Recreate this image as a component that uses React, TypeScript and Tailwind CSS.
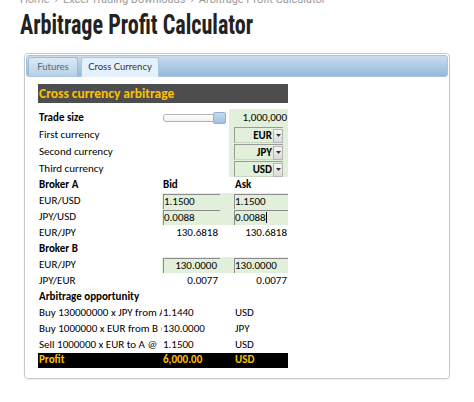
import React from 'react';

const cell = "font-['Carlito','Lato',sans-serif] text-[11px] text-black";

function Dropdown({ value }: { value: string }) {
  return (
    <div className="h-[16px] mx-[5px] flex border-t border-l border-[#9a9a9a] border-b border-b-[#c9d6c0] bg-[#e2efda]">
      <span className="flex-1 text-right font-bold leading-[15px] pr-[1px]">{value}</span>
      <span className="w-[10px] h-[14px] mt-[0.5px] border border-[#b5b5b5] bg-gradient-to-b from-[#f6f6f6] to-[#d9d9d9] flex items-center justify-center">
        <svg width="5" height="3" viewBox="0 0 5 3">
          <path d="M0 0h5L2.5 3z" fill="#333" />
        </svg>
      </span>
    </div>
  );
}

function InputBox({ value, align = 'left', caret = false }: { value: string; align?: 'left' | 'right'; caret?: boolean }) {
  return (
    <div
      className={`h-[15px] border-t border-l border-[#8c8c8c] leading-[14px] ${align === 'right' ? 'text-right pr-[3px]' : 'text-left'}`}
    >
      {value}
      {caret && <span className="inline-block w-[1px] h-[11px] bg-black align-[-2px]" />}
    </div>
  );
}

function Row({ label, bold = false, children }: { label: string; bold?: boolean; children?: React.ReactNode }) {
  return (
    <div className="flex h-[16px] items-center">
      <div className={`w-[124px] pl-[1px] whitespace-nowrap overflow-hidden ${bold ? 'font-bold' : ''}`}>{label}</div>
      {children}
    </div>
  );
}

export default function App() {
  return (
    <div className="w-[474px] h-[402px] overflow-hidden bg-white pl-[20px]">
      {/* breadcrumb, cut off at top */}
      <div className="-mt-[7px] h-[13px] text-[11px] leading-[13px] text-[#9a9a9a] font-['Roboto',sans-serif] whitespace-nowrap flex gap-[5px]">
        <span>Home</span>
        <span>›</span>
        <span>Excel Trading Downloads</span>
        <span>›</span>
        <span>Arbitrage Profit Calculator</span>
      </div>

      <h1 className="mt-[4px] h-[30px] text-[27px] leading-[30px] font-bold text-[#222] font-['Roboto_Condensed','Liberation_Sans_Narrow','Roboto',sans-serif] whitespace-nowrap origin-left scale-x-[0.82]">
        Arbitrage Profit Calculator
      </h1>

      {/* tab panel */}
      <div className="mt-[13px] ml-[4px] w-[426px] h-[326px] border border-[#c9c9c9] rounded-[4px] p-[1px] shadow-[0_1px_2px_rgba(0,0,0,0.08)]">
        <div className="h-[22px] rounded-[3px] border border-[#a6c4de] bg-gradient-to-b from-[#c9ddef] to-[#94b9da] flex items-end pl-[1px] gap-[3px] font-['Lato',sans-serif] text-[9.5px]">
          <div className="h-[19px] w-[50px] rounded-t-[3px] border border-b-0 border-[#9dbcd8] bg-gradient-to-b from-[#dde9f4] to-[#b7d0e6] text-[#4f6c86] flex items-center justify-center">
            Futures
          </div>
          <div className="h-[20px] w-[78px] -mb-[1px] rounded-t-[3px] border border-b-0 border-[#aac8e2] bg-[#e4f0fb] text-[#333] flex items-center justify-center">
            Cross Currency
          </div>
        </div>

        <div className={`pl-[12px] pt-[7px] ${cell}`}>
          <div className="w-[250px] h-[19px] bg-[#4d4d4d] text-[#ffc000] font-bold text-[13.5px] leading-[19px] pl-[1px]">
            Cross currency arbitrage
          </div>

          {/* inputs */}
          <div className="mt-[6px] flex">
            <div className="w-[124px]">
              <div className="h-[17px] leading-[17px] pl-[1px] font-bold">Trade size</div>
              <div className="h-[17px] leading-[17px] pl-[1px]">First currency</div>
              <div className="h-[17px] leading-[17px] pl-[1px]">Second currency</div>
              <div className="h-[17px] leading-[17px] pl-[1px]">Third currency</div>
            </div>
            <div className="w-[67px] pt-[4px] pl-[1px]">
              <div className="relative w-[63px] h-[10px]">
                <div className="absolute left-0 top-[1px] w-[54px] h-[8px] rounded-[3px] border border-[#b4b4b4] bg-gradient-to-b from-[#ffffff] to-[#f0f0f0]" />
                <div className="absolute left-[50px] top-[-1px] w-[13px] h-[12px] rounded-[2px] border border-[#8fb0cf] bg-gradient-to-b from-[#c4dbf0] to-[#9fc2e3]" />
              </div>
            </div>
            <div className="w-[59px] h-[68px] bg-[#e2efda]">
              <div className="h-[17px] leading-[17px] text-right pr-[1px]">1,000,000</div>
              <div className="h-[17px] pt-[1px]"><Dropdown value="EUR" /></div>
              <div className="h-[17px] pt-[1px]"><Dropdown value="JPY" /></div>
              <div className="h-[17px] pt-[1px]"><Dropdown value="USD" /></div>
            </div>
          </div>

          {/* broker A */}
          <Row label="Broker A" bold>
            <div className="w-[72px] pl-[1px] font-bold">Bid</div>
            <div className="w-[54px] pl-[1px] font-bold">Ask</div>
          </Row>
          <Row label="EUR/USD">
            <div className="flex h-[16px] bg-[#e2efda] pt-[1px]">
              <div className="w-[58px] pl-[1px]"><InputBox value="1.1500" /></div>
              <div className="w-[14px]" />
              <div className="w-[54px]"><InputBox value="1.1500" /></div>
            </div>
          </Row>
          <Row label="JPY/USD">
            <div className="flex h-[16px] bg-[#e2efda] pt-[1px]">
              <div className="w-[58px] pl-[1px]"><InputBox value="0.0088" /></div>
              <div className="w-[14px]" />
              <div className="w-[54px]"><InputBox value="0.0088" caret /></div>
            </div>
          </Row>
          <Row label="EUR/JPY">
            <div className="w-[58px] text-right pr-[2px]">130.6818</div>
            <div className="w-[14px]" />
            <div className="w-[54px] text-right pr-[1px]">130.6818</div>
          </Row>

          {/* broker B */}
          <Row label="Broker B" bold />
          <Row label="EUR/JPY">
            <div className="flex h-[16px] bg-[#e2efda] pt-[1px]">
              <div className="w-[58px] pl-[1px]"><InputBox value="130.0000" align="right" /></div>
              <div className="w-[14px]" />
              <div className="w-[54px]"><InputBox value="130.0000" /></div>
            </div>
          </Row>
          <Row label="JPY/EUR">
            <div className="w-[58px] text-right pr-[2px]">0.0077</div>
            <div className="w-[14px]" />
            <div className="w-[54px] text-right pr-[1px]">0.0077</div>
          </Row>

          {/* result */}
          <Row label="Arbitrage opportunity" bold />
          <Row label="Buy 130000000 x JPY from A @">
            <div className="w-[72px] pl-[1px]">1.1440</div>
            <div className="w-[54px] pl-[1px]">USD</div>
          </Row>
          <Row label="Buy 1000000 x EUR from B @">
            <div className="w-[72px] pl-[1px]">130.0000</div>
            <div className="w-[54px] pl-[1px]">JPY</div>
          </Row>
          <Row label="Sell 1000000 x EUR to A @">
            <div className="w-[72px] pl-[1px]">1.1500</div>
            <div className="w-[54px] pl-[1px]">USD</div>
          </Row>
          <div className="w-[250px] h-[15px] bg-black text-[#ffc000] font-bold flex items-center">
            <div className="w-[124px] pl-[1px]">Profit</div>
            <div className="w-[72px] pl-[1px]">6,000.00</div>
            <div className="w-[54px] pl-[1px]">USD</div>
          </div>
        </div>
      </div>
    </div>
  );
}
